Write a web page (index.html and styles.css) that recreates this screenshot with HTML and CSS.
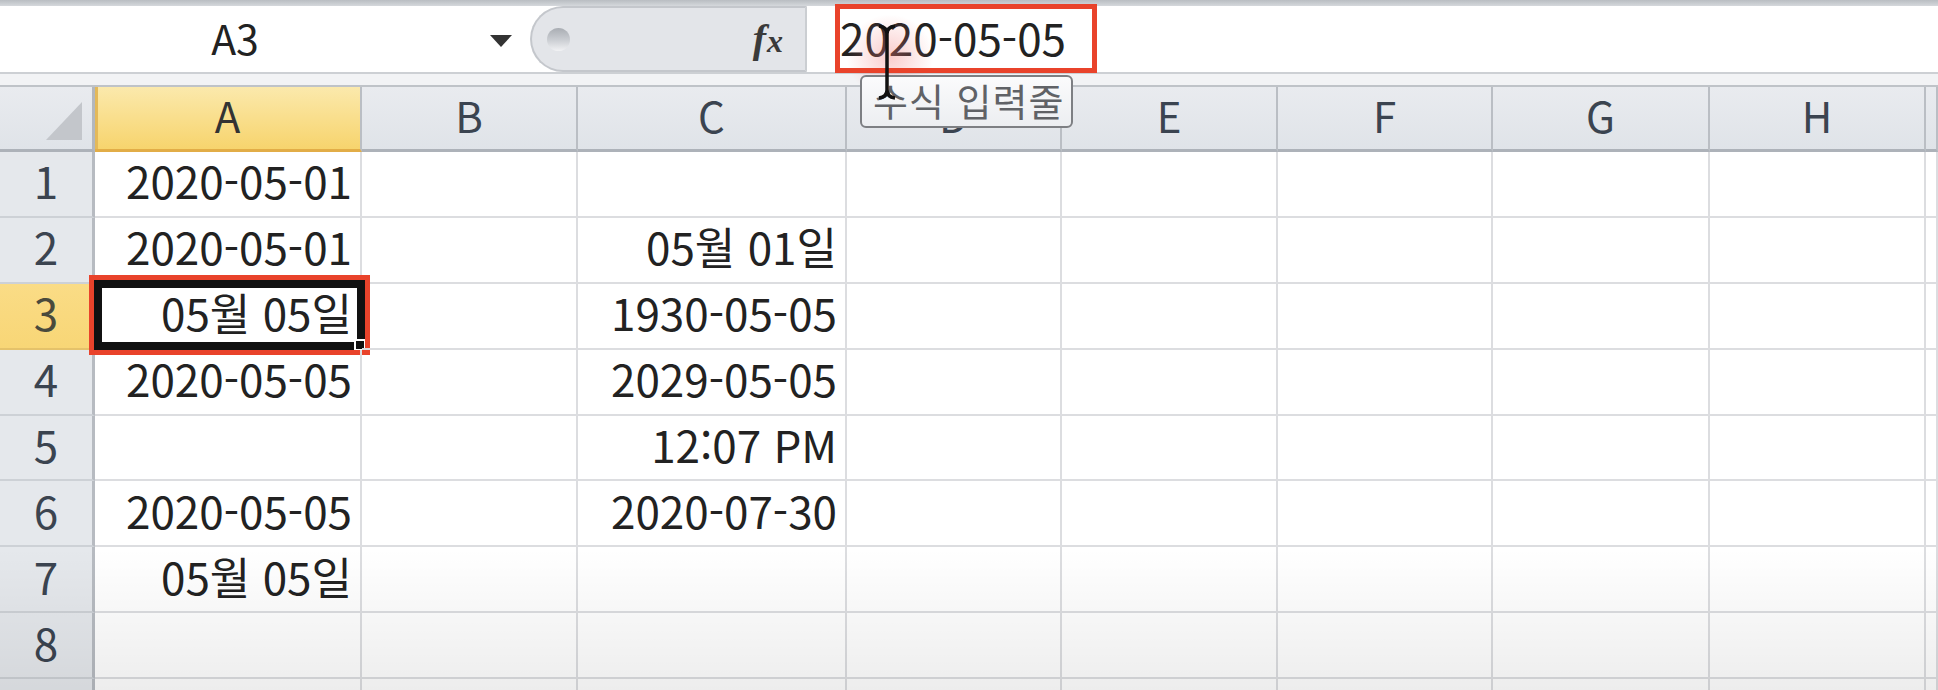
FILE: index.html
```html
<!DOCTYPE html>
<html lang="ko">
<head>
<meta charset="utf-8">
<title>Excel</title>
<link rel="stylesheet" href="styles.css">
</head>
<body>
<div class="app">
  <div class="topstrip"></div>
  <div class="fbar">
    <div class="namebox"><span class="ref">A3</span><span class="arrow"></span></div>
    <div class="pill"><span class="grip"></span><span class="fx"><i class="f">f</i><i class="x">x</i></span></div>
    <div class="formula"><span class="ftext">2020-05-05</span></div>
  </div>
  <div class="gap"></div>
  <div class="sheet">
    <div class="row hrow">
      <div class="h corner"><svg class="tri" width="36" height="38" viewBox="0 0 36 38"><polygon points="36,0 36,38 0,38" fill="#c3c6cb"/></svg></div>
      <div class="h sel">A</div><div class="h">B</div><div class="h">C</div><div class="h">D</div><div class="h">E</div><div class="h">F</div><div class="h">G</div><div class="h">H</div><div class="h"></div>
    </div>
    <div class="row">
      <div class="rh">1</div><div class="c">2020-05-01</div><div class="c"></div><div class="c"></div><div class="c"></div><div class="c"></div><div class="c"></div><div class="c"></div><div class="c"></div><div class="c"></div>
    </div>
    <div class="row">
      <div class="rh">2</div><div class="c">2020-05-01</div><div class="c"></div><div class="c">05월 01일</div><div class="c"></div><div class="c"></div><div class="c"></div><div class="c"></div><div class="c"></div><div class="c"></div>
    </div>
    <div class="row">
      <div class="rh rsel">3</div><div class="c active">05월 05일<span class="selbox"></span><span class="handle"></span><span class="redbox"></span></div><div class="c"></div><div class="c">1930-05-05</div><div class="c"></div><div class="c"></div><div class="c"></div><div class="c"></div><div class="c"></div><div class="c"></div>
    </div>
    <div class="row">
      <div class="rh">4</div><div class="c">2020-05-05</div><div class="c"></div><div class="c">2029-05-05</div><div class="c"></div><div class="c"></div><div class="c"></div><div class="c"></div><div class="c"></div><div class="c"></div>
    </div>
    <div class="row">
      <div class="rh">5</div><div class="c"></div><div class="c"></div><div class="c">12:07 PM</div><div class="c"></div><div class="c"></div><div class="c"></div><div class="c"></div><div class="c"></div><div class="c"></div>
    </div>
    <div class="row">
      <div class="rh">6</div><div class="c">2020-05-05</div><div class="c"></div><div class="c">2020-07-30</div><div class="c"></div><div class="c"></div><div class="c"></div><div class="c"></div><div class="c"></div><div class="c"></div>
    </div>
    <div class="row">
      <div class="rh">7</div><div class="c">05월 05일</div><div class="c"></div><div class="c"></div><div class="c"></div><div class="c"></div><div class="c"></div><div class="c"></div><div class="c"></div><div class="c"></div>
    </div>
    <div class="row">
      <div class="rh">8</div><div class="c"></div><div class="c"></div><div class="c"></div><div class="c"></div><div class="c"></div><div class="c"></div><div class="c"></div><div class="c"></div><div class="c"></div>
    </div>
    <div class="row">
      <div class="rh"></div><div class="c"></div><div class="c"></div><div class="c"></div><div class="c"></div><div class="c"></div><div class="c"></div><div class="c"></div><div class="c"></div><div class="c"></div>
    </div>
  </div>

  <div class="fade"></div>
  <div class="glow"></div>
  <div class="fmark"></div>
  <div class="tooltip">수식 입력줄</div>
  <svg class="ibeam" width="22" height="76" viewBox="0 0 22 76">
    <path d="M3 2 Q11 3 11 10 V66 Q11 73 3 74 M19 2 Q11 3 11 10 M19 74 Q11 73 11 66" fill="none" stroke="#111" stroke-width="3.5"/>
  </svg>
</div>
</body>
</html>
```

FILE: styles.css
```css
* { box-sizing: border-box; margin: 0; padding: 0; }
html, body { width: 1938px; height: 690px; overflow: hidden; background: #fff; }
body { font-family: "Noto Sans CJK KR", "Noto Sans", sans-serif; color: #222; }

.app { position: relative; width: 1938px; height: 690px; overflow: hidden; }

.topstrip { height: 6px; background: linear-gradient(#b9bdc2, #d5d8dc); }

.fbar { display: flex; height: 66px; background: #fff; }
.namebox { width: 530px; display: flex; align-items: center; }
.ref { width: 470px; text-align: center; font-size: 41px; line-height: 1; color: #222; padding-bottom: 4px; }
.arrow { width: 0; height: 0; margin-left: 20px; margin-top: 4px;
  border-left: 11px solid transparent; border-right: 11px solid transparent; border-top: 12px solid #333; }

.pill { width: 277px; display: flex; align-items: center; justify-content: space-between;
  padding: 0 22px 0 15px; background: #e3e5e9;
  border: 2px solid #c4c7cc; border-right-color: #cbced2;
  border-radius: 33px 0 0 33px; }
.grip { width: 23px; height: 23px; border-radius: 50%;
  background: linear-gradient(#a9adb3, #c9ccd1 50%, #f1f2f4); }
.fx { display: flex; align-items: baseline; font-family: "Liberation Serif", serif; color: #3a3a3a; font-weight: bold; margin-top: -2px; }
.fx .f { font-size: 40px; }
.fx .x { font-size: 32px; margin-left: 1px; }

.formula { flex: 1; display: flex; align-items: center; padding-left: 33px; font-size: 44px; line-height: 1; color: #222; }
.ftext { padding-bottom: 4px; }

.gap { height: 13px; border-top: 2px solid #cdd0d4; background: #f2f3f5; }

.sheet { display: flex; flex-direction: column; }
.row { display: grid; grid-template-columns: 95px 267px 216px 269px 215px 216px 215px 217px 216px 1fr;
  grid-template-rows: 100%; height: 65.9px; flex: none; }
.hrow { height: 67px; border-top: 2px solid #bfc3c8; background: linear-gradient(#e9ebef, #dfe3e8); }

.h { display: flex; align-items: center; justify-content: center; font-size: 42px; line-height: 1; color: #3b4450;
  border-right: 2px solid #babec4; border-bottom: 3px solid #adb2b9; padding-bottom: 6px; }
.h.corner { align-items: flex-end; justify-content: flex-end; padding: 0 10px 9px 0; border-right: 3px solid #b3b7bd; }
.tri { display: block; }
.h.sel { background: linear-gradient(#fbe9ac, #f7d46d); color: #333; border-bottom-color: #e2ad47; box-shadow: inset 3px 0 #e4b959; }

.rh { display: flex; align-items: center; justify-content: center; font-size: 44px; line-height: 1; color: #3b4450;
  background: #e5e8ec; border-right: 3px solid #b7bbc1; border-bottom: 2px solid #cdd1d6; padding-bottom: 7px; }
.rh.rsel { background: linear-gradient(#fadc86, #f8d676); color: #4a4a3c; border-right-color: #dcb25a; border-bottom-color: #e5c26a; }

.c { position: relative; display: flex; align-items: center; justify-content: flex-end; font-size: 44px; line-height: 1; color: #222;
  padding-right: 8px; padding-bottom: 7px; white-space: nowrap;
  border-right: 2px solid #dcdde0; border-bottom: 2px solid #dcdde0; }

.selbox { position: absolute; left: -1px; top: -4px; right: -5px; bottom: -2px; border: 8px solid #111; }
.handle { position: absolute; right: -6px; bottom: -3px; width: 12px; height: 12px; background: #111; border: 2px solid #fff; }
.redbox { position: absolute; left: -6px; top: -9px; right: -10px; bottom: -7px; border: 5px solid #e9432b; }

.fade { position: absolute; left: 0; top: 548px; width: 1938px; height: 142px; pointer-events: none;
  background: linear-gradient(rgba(0,0,0,0), rgba(0,0,0,0.07)); }

.glow { position: absolute; left: 846px; top: 14px; width: 88px; height: 84px; pointer-events: none;
  background: radial-gradient(ellipse at center, rgba(240,120,120,0.38), rgba(240,120,120,0) 70%); }

.fmark { position: absolute; left: 835px; top: 4px; width: 262px; height: 69px; border: 5px solid #e9432b; }

.tooltip { position: absolute; left: 860px; top: 75px; width: 213px; height: 53px;
  display: flex; align-items: center;
  border: 2px solid #7d7f83; border-radius: 6px; background: linear-gradient(#fbfbfc, #eceef1);
  font-size: 38px; line-height: 1; letter-spacing: 1px; color: #606266; padding: 0 0 4px 11px; white-space: nowrap; }

.ibeam { position: absolute; left: 876px; top: 24px; }
```
